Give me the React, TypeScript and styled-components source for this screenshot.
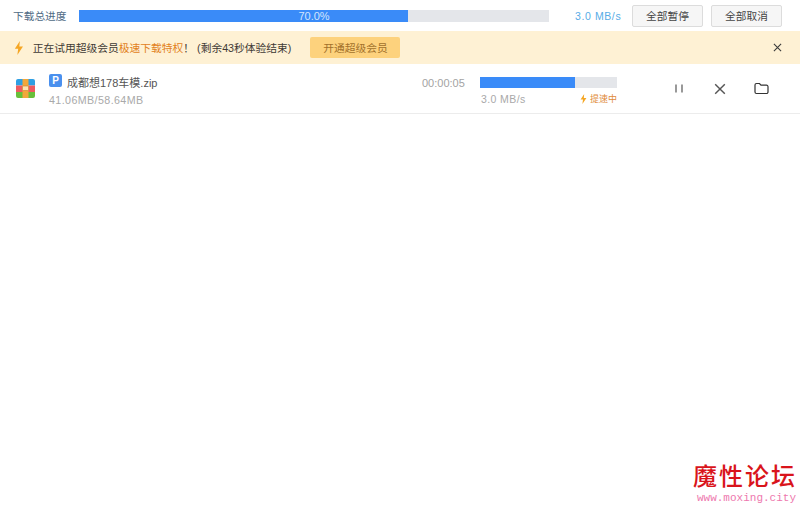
import React from 'react';
import styled, { createGlobalStyle } from 'styled-components';

const GlobalStyle = createGlobalStyle`
    html, body {
        margin: 0;
        padding: 0;
        background: #fff;
        font-family: "Liberation Sans", "Noto Sans CJK SC", sans-serif;
    }
`;

const Page = styled.div`
    position: relative;
    width: 800px;
    height: 512px;
    overflow: hidden;
    background: #fff;
`;

const TopBar = styled.div`
    height: 31px;
    display: flex;
    align-items: center;
    padding-left: 13px;
    font-size: 10px;
`;

const TopLabel = styled.div`
    width: 66px;
    color: #4f6b85;
    font-size: 10.7px;
`;

const Track = styled.div<{ $w: number; $h: number }>`
    position: relative;
    width: ${(p) => p.$w}px;
    height: ${(p) => p.$h}px;
    background: #e4e6ea;
`;

const Fill = styled.div`
    height: 100%;
    background: #3a8bf8;
`;

const TrackText = styled.div`
    position: absolute;
    inset: 0;
    display: flex;
    align-items: center;
    justify-content: center;
    color: #d3e5fc;
    font-size: 11px;
`;

const TotalSpeed = styled.div`
    width: 47px;
    margin-left: 26px;
    color: #58ace6;
    font-size: 10.5px;
    letter-spacing: 0.6px;
    white-space: nowrap;
`;

const TopButton = styled.button<{ $gap: number }>`
    width: 71px;
    height: 22px;
    margin-left: ${(p) => p.$gap}px;
    padding: 0;
    border: 1px solid #dcdcdc;
    border-radius: 2px;
    background: #f6f6f6;
    color: #444;
    font-family: inherit;
    font-size: 10.7px;
`;

const Banner = styled.div`
    height: 33px;
    display: flex;
    align-items: center;
    padding-left: 14px;
    background: #fef1d4;
    color: #3e3a34;
    font-size: 10.75px;
`;

const BannerText = styled.span`
    margin-left: 9px;
    white-space: nowrap;
`;

const Highlight = styled.span`
    color: #e2811c;
`;

const OpenVip = styled.button`
    width: 90px;
    height: 21px;
    margin-left: 19px;
    padding: 0;
    border: none;
    border-radius: 2px;
    background: #fdd27d;
    color: #a2712b;
    font-family: inherit;
    font-size: 10.75px;
`;

const BannerClose = styled.div`
    display: flex;
    margin-left: auto;
    margin-right: 18px;
`;

const TaskRow = styled.div`
    height: 49px;
    display: flex;
    align-items: center;
    border-bottom: 1px solid #ececec;
    padding-left: 16px;
`;

const TaskInfo = styled.div`
    width: 373px;
    margin-left: 14px;
    margin-top: 5px;
`;

const TaskName = styled.div`
    display: flex;
    align-items: center;
    color: #555;
    font-size: 11px;
    line-height: 14px;
`;

const PBadge = styled.span`
    width: 13px;
    height: 13px;
    margin-right: 5px;
    margin-top: -4px;
    border-radius: 2px;
    background: #4a90ee;
    color: #fff;
    font-size: 10px;
    font-weight: bold;
    line-height: 13px;
    text-align: center;
`;

const TaskSize = styled.div`
    margin-top: 4px;
    color: #a9a9a9;
    font-size: 10.7px;
    letter-spacing: 0.4px;
    line-height: 13px;
`;

const TimeLeft = styled.div`
    width: 58px;
    margin-top: -11px;
    color: #a3a3a3;
    font-size: 11px;
`;

const TaskProgress = styled.div`
    width: 137px;
    margin-top: 5px;
`;

const ProgressMeta = styled.div`
    display: flex;
    align-items: center;
    justify-content: space-between;
    margin-top: 5px;
    padding-left: 1px;
    color: #a9a9a9;
    font-size: 10.5px;
    letter-spacing: 0.4px;
    line-height: 13px;
`;

const Boost = styled.span`
    display: flex;
    align-items: center;
    gap: 3px;
    color: #e08a3a;
    font-size: 9px;
    letter-spacing: 0;
`;

const Actions = styled.div`
    display: flex;
    align-items: center;
    gap: 28px;
    margin-left: 56px;
`;

const Watermark = styled.div`
    position: absolute;
    right: 4px;
    bottom: 8px;
    text-align: right;
`;

const WatermarkTitle = styled.div`
    margin-right: -1px;
    color: #d9141b;
    font-family: "Noto Sans CJK SC", sans-serif;
    font-size: 24px;
    font-weight: 500;
    line-height: 26px;
    letter-spacing: 2px;
    white-space: nowrap;
`;

const WatermarkUrl = styled.div`
    margin-top: 4px;
    color: #ee78ae;
    font-family: "Liberation Mono", monospace;
    font-size: 11px;
    line-height: 12px;
    white-space: nowrap;
`;

const Bolt = ({ size, color }: { size: number; color: string }) => (
    <svg width={size * 0.7} height={size} viewBox="0 0 7 10">
        <path d="M4.2 0 L0.6 5.6 H3 L2.4 10 L6.4 3.9 H3.8 Z" fill={color} />
    </svg>
);

const Cross = ({ size, color }: { size: number; color: string }) => (
    <svg width={size} height={size} viewBox="0 0 10 10">
        <path d="M1 1 L9 9 M9 1 L1 9" stroke={color} strokeWidth="1.2" fill="none" />
    </svg>
);

const ZipIcon = () => (
    <svg width="19" height="19" viewBox="0 0 19 19">
        <path d="M2 0 H17 a2 2 0 0 1 2 2 V6.500 H0 V2 a2 2 0 0 1 2 -2 Z" fill="#2f9fe3" />
        <rect x="0" y="6.500" width="19" height="6.500" fill="#ef5a5f" />
        <path d="M0 13 H19 V17 a2 2 0 0 1 -2 2 H2 a2 2 0 0 1 -2 -2 Z" fill="#68bf3a" />
        <rect x="6.500" y="0" width="6" height="19" fill="#f2a73b" />
        <rect x="6.500" y="7" width="6" height="4.500" rx="0.8" fill="#fbe3b4" stroke="#c9812c" strokeWidth="0.6" />
    </svg>
);

const App: React.FC = () => {
    return (
        <Page>
            <GlobalStyle />
            <TopBar>
                <TopLabel>下载总进度</TopLabel>
                <Track $w={470} $h={12}>
                    <Fill style={{ width: '70%' }} />
                    <TrackText>70.0%</TrackText>
                </Track>
                <TotalSpeed>3.0 MB/s</TotalSpeed>
                <TopButton $gap={10}>全部暂停</TopButton>
                <TopButton $gap={8}>全部取消</TopButton>
            </TopBar>
            <Banner>
                <Bolt size={14} color="#f5a623" />
                <BannerText>
                    正在试用超级会员<Highlight>极速下载特权</Highlight>！ (剩余43秒体验结束)
                </BannerText>
                <OpenVip>开通超级会员</OpenVip>
                <BannerClose>
                    <Cross size={9} color="#3a3a3a" />
                </BannerClose>
            </Banner>
            <TaskRow>
                <ZipIcon />
                <TaskInfo>
                    <TaskName>
                        <PBadge>P</PBadge>
                        成都想178车模.zip
                    </TaskName>
                    <TaskSize>41.06MB/58.64MB</TaskSize>
                </TaskInfo>
                <TimeLeft>00:00:05</TimeLeft>
                <TaskProgress>
                    <Track $w={137} $h={11}>
                        <Fill style={{ width: '69%' }} />
                    </Track>
                    <ProgressMeta>
                        <span>3.0 MB/s</span>
                        <Boost>
                            <Bolt size={10} color="#f5a623" />
                            提速中
                        </Boost>
                    </ProgressMeta>
                </TaskProgress>
                <Actions>
                    <svg width="13" height="13" viewBox="0 0 13 13">
                        <path d="M3 2.500 V10.500 M9 2.500 V10.500" stroke="#555" strokeWidth="1.2" fill="none" />
                    </svg>
                    <Cross size={12} color="#555" />
                    <svg width="15" height="13" viewBox="0 0 15 13">
                        <path d="M1 3 a1.500 1.500 0 0 1 1.500 -1.500 H5.500 L7 3.200 H12.500 a1.500 1.500 0 0 1 1.500 1.500 V10 a1.500 1.500 0 0 1 -1.500 1.500 H2.500 a1.500 1.500 0 0 1 -1.500 -1.500 Z" stroke="#333" strokeWidth="1.2" fill="none" />
                    </svg>
                </Actions>
            </TaskRow>
            <Watermark>
                <WatermarkTitle>魔性论坛</WatermarkTitle>
                <WatermarkUrl>www.moxing.city</WatermarkUrl>
            </Watermark>
        </Page>
    );
};

export default App;
